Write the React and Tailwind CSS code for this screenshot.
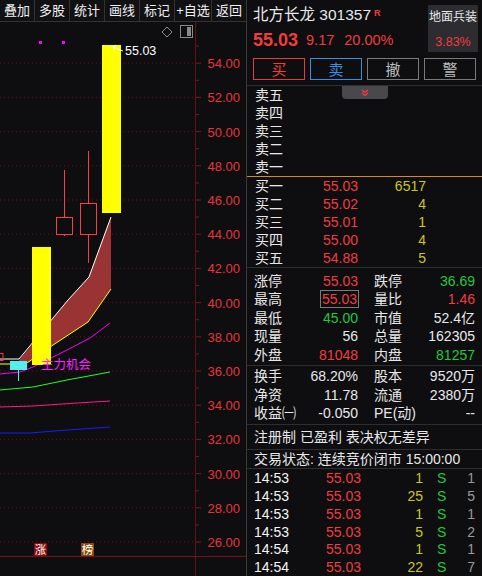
import React from "react";

const SVGF = "'Liberation Sans', 'Noto Sans CJK SC', sans-serif";

function Chart() {
  const labels = [54, 52, 50, 48, 46, 44, 42, 40, 38, 36, 34, 32, 30, 28, 26];
  const yOf = (p) => 542 - (p - 26) * 17.1;
  const ticks = [];
  for (let p = 27; p <= 55; p += 2) ticks.push(p);
  return (
    <svg width="246" height="554" viewBox="0 22 246 554" className="block">
      {labels.map((p) => (
        <g key={p}>
          <line x1="0" x2="195" y1={yOf(p)} y2={yOf(p)} stroke="#6a1212" strokeWidth="1" strokeDasharray="1 3" />
          <line x1="195" x2="201" y1={yOf(p)} y2={yOf(p)} stroke="#7a1a1a" strokeWidth="1" />
          <text x="240" y={yOf(p) + 5} textAnchor="end" fill="#e63636" fontSize="13" fontFamily={SVGF}>
            {p.toFixed(2)}
          </text>
        </g>
      ))}
      {ticks.map((p) => (
        <line key={p} x1="195" x2="199" y1={yOf(p)} y2={yOf(p)} stroke="#7a1a1a" strokeWidth="1" />
      ))}
      <line x1="195.5" x2="195.5" y1="22" y2="576" stroke="#5e1414" strokeWidth="1" />
      <line x1="0" x2="246" y1="556.5" y2="556.5" stroke="#7a1010" strokeWidth="1" />

      <polygon points="167,27 172,32 167,37 162,32" fill="none" stroke="#8a8a8a" strokeWidth="1" />
      <rect x="180.5" y="25.5" width="12" height="12" fill="none" stroke="#8a8a8a" strokeWidth="1" />
      <rect x="187" y="27" width="4" height="9" fill="#8a8a8a" />

      <rect x="39" y="41" width="3" height="3" fill="#ff00ff" />
      <rect x="62" y="41" width="3" height="3" fill="#ff00ff" />

      <polygon points="19,360 68,300 89,277 111,217 111,289 88,322 50,347 27,363 19,363" fill="#9a3434" />
      <polyline points="0,359 19,359 68,300 89,277 111,217" fill="none" stroke="#ffffff" strokeWidth="1" />
      <polyline points="0,364 10,364 27,363 50,347 88,322 111,289" fill="none" stroke="#ffff00" strokeWidth="1" />

      <polyline points="0,374 20,372 33,367 53,357 67,350 90,338 110,323" fill="none" stroke="#ff00ff" strokeWidth="1" />
      <polyline points="0,390 33,387 67,380 110,372" fill="none" stroke="#22ff22" strokeWidth="1" />
      <polyline points="0,407 33,406 77,403 110,401" fill="none" stroke="#ff1a80" strokeWidth="1" />
      <polyline points="0,433 30,433 67,430 110,427" fill="none" stroke="#1a1aff" strokeWidth="1.2" />

      <rect x="-2" y="353.5" width="5" height="7" fill="none" stroke="#ff3333" strokeWidth="1" />
      <rect x="10" y="361" width="17" height="9" fill="#55eeee" />
      <line x1="18.5" x2="18.5" y1="370" y2="381" stroke="#55eeee" strokeWidth="1" />

      <rect x="32" y="247" width="19" height="118" fill="#ffff00" />

      <line x1="64.5" x2="64.5" y1="170" y2="236" stroke="#ff3c3c" strokeWidth="1" />
      <rect x="56.5" y="217.5" width="16" height="17" fill="#0e0e11" stroke="#ff3c3c" strokeWidth="1" />
      <line x1="88.5" x2="88.5" y1="151" y2="263" stroke="#ff3c3c" strokeWidth="1" />
      <rect x="80.5" y="203.5" width="16" height="31" fill="#0e0e11" stroke="#ff3c3c" strokeWidth="1" />

      <rect x="102" y="45" width="19" height="168" fill="#ffff00" />
      <path d="M113 47 L123 51 M113 47 L116 45 M113 47 L115 50" stroke="#ffffff" strokeWidth="1" fill="none" />
      <text x="125" y="55" fill="#ffffff" fontSize="12.5" fontFamily={SVGF}>55.03</text>

      <text x="41" y="369" fill="#ff22ff" fontSize="12.5" fontFamily={SVGF}>主力机会</text>

      <rect x="34" y="543" width="13" height="13" fill="#8b0a0a" />
      <text x="40.5" y="554" textAnchor="middle" fill="#ffffff" fontSize="11.5" fontFamily={SVGF}>涨</text>
      <rect x="81" y="543" width="13" height="13" fill="#8a4a05" />
      <text x="87.5" y="554" textAnchor="middle" fill="#ffffff" fontSize="11.5" fontFamily={SVGF}>榜</text>
    </svg>
  );
}

function Toolbar() {
  const items = [
    ["叠加", "w-[35px]"],
    ["多股", "w-[35px]"],
    ["统计", "w-[35px]"],
    ["画线", "w-[35px]"],
    ["标记", "w-[35px]"],
    ["+自选", "w-[37px]"],
  ];
  return (
    <div className="h-[22px] flex border-b border-[#333] bg-[#111114] text-[13px] text-[#f0f0f0]">
      {items.map(([t, w]) => (
        <div key={t} className={`${w} h-full flex items-center justify-center border-r border-[#333] leading-none whitespace-nowrap`}>
          {t}
        </div>
      ))}
      <div className="flex-1 h-full flex items-center justify-center leading-none">返回</div>
    </div>
  );
}

function BookRow({ label, price, vol }) {
  return (
    <div className="h-[18px] flex items-center pl-[8px] leading-none">
      <span className="w-[50px]">{label}</span>
      <span className="w-[53px] text-right text-[#f23c3c]">{price}</span>
      <span className="w-[68px] text-right text-[#c8c81e]">{vol}</span>
    </div>
  );
}

function StatRow({ l1, v1, c1, l2, v2, c2, box }) {
  return (
    <div className="h-[18.5px] flex items-center pl-[7px] pr-[7px] leading-none">
      <div className="w-[104px] flex justify-between items-center">
        <span>{l1}</span>
        {box ? (
          <span className={`${c1} border border-[#7a7a7a] px-[1px] py-[1px] -mr-[1px]`}>{v1}</span>
        ) : (
          <span className={c1}>{v1}</span>
        )}
      </div>
      <div className="ml-[16px] flex-1 flex justify-between items-center">
        <span>{l2}</span>
        <span className={c2}>{v2}</span>
      </div>
    </div>
  );
}

function TradeRow({ t, p, v, n }) {
  return (
    <div className="h-[17.8px] flex items-center pl-[7px] pr-[7px] leading-none">
      <span className="w-[60px] text-[#f4f4f4]">{t}</span>
      <span className="w-[47px] text-right text-[#f23c3c]">{p}</span>
      <span className="w-[62px] text-right text-[#c8c81e]">{v}</span>
      <span className="w-[8px] ml-[14px] text-[#22c83c]">S</span>
      <span className="flex-1 text-right text-[#9a9a9a]">{n}</span>
    </div>
  );
}

function Panel() {
  const W = "text-[#e8e8e8]";
  return (
    <div className="w-[236px] h-full border-l border-[#3a3a3a] flex flex-col relative text-[14px] text-[#e8e8e8]">
      <div className="h-[87px] border-b border-[#2e2e2e] flex flex-col">
        <div className="flex pl-[6px] pr-[4px]">
          <div className="flex-1 flex flex-col">
            <div className="h-[30px] flex items-center text-[15.5px] leading-none">
              <span>北方长龙 301357</span>
              <span className="text-[9px] font-bold text-[#f23c3c] self-start mt-[9px] ml-[3px]">R</span>
            </div>
            <div className="h-[20px] flex items-center text-[#f23c3c] leading-none">
              <span className="text-[18px] font-bold">55.03</span>
              <span className="text-[14.5px] ml-[8px]">9.17</span>
              <span className="text-[14.5px] ml-[10px]">20.00%</span>
            </div>
          </div>
          <div className="mt-[5px] w-[50px] h-[47px] bg-[#2c2c31] flex flex-col items-center leading-none whitespace-nowrap">
            <span className="text-[12px] mt-[6px]">地面兵装</span>
            <span className="text-[12.5px] text-[#f23c3c] mt-[13px]">3.83%</span>
          </div>
        </div>
        <div className="flex gap-[5px] pl-[6px] mt-[6px] text-[15px] leading-none">
          <div className="w-[52px] h-[22px] border border-[#e23c3c] text-[#f23c3c] flex items-center justify-center">买</div>
          <div className="w-[52px] h-[22px] border border-[#3a8ee0] text-[#3a8ee0] flex items-center justify-center">卖</div>
          <div className="w-[52px] h-[22px] border border-[#7a7a7a] text-[#bdbdbd] flex items-center justify-center">撤</div>
          <div className="w-[52px] h-[22px] border border-[#7a7a7a] text-[#bdbdbd] flex items-center justify-center">警</div>
        </div>
      </div>

      <div className="absolute top-[86px] left-[95px] w-[46px] h-[13px] bg-[#48484d] rounded-b-[4px] flex items-center justify-center">
        <svg width="10" height="8" viewBox="0 0 10 8">
          <polyline points="2,1 5,3.5 8,1" fill="none" stroke="#ff3c3c" strokeWidth="1.2" />
          <polyline points="2,4 5,6.5 8,4" fill="none" stroke="#ff3c3c" strokeWidth="1.2" />
        </svg>
      </div>

      <div className="h-[91px] border-b border-[#d98a1c] flex flex-col">
        {["卖五", "卖四", "卖三", "卖二", "卖一"].map((l) => (
          <BookRow key={l} label={l} price="" vol="" />
        ))}
      </div>

      <div className="h-[91px] border-b border-[#2e2e2e] flex flex-col">
        <BookRow label="买一" price="55.03" vol="6517" />
        <BookRow label="买二" price="55.02" vol="4" />
        <BookRow label="买三" price="55.01" vol="1" />
        <BookRow label="买四" price="55.00" vol="4" />
        <BookRow label="买五" price="54.88" vol="5" />
      </div>

      <div className="h-[98px] border-b border-[#2e2e2e] flex flex-col pt-[3px]">
        <StatRow l1="涨停" v1="55.03" c1="text-[#f23c3c]" l2="跌停" v2="36.69" c2="text-[#22c83c]" />
        <StatRow l1="最高" v1="55.03" c1="text-[#f23c3c]" l2="量比" v2="1.46" c2="text-[#f23c3c]" box />
        <StatRow l1="最低" v1="45.00" c1="text-[#22c83c]" l2="市值" v2="52.4亿" c2={W} />
        <StatRow l1="现量" v1="56" c1={W} l2="总量" v2="162305" c2={W} />
        <StatRow l1="外盘" v1="81048" c1="text-[#f23c3c]" l2="内盘" v2="81257" c2="text-[#22c83c]" />
      </div>

      <div className="h-[60px] border-b border-[#2e2e2e] flex flex-col pt-[1px]">
        <StatRow l1="换手" v1="68.20%" c1={W} l2="股本" v2="9520万" c2={W} />
        <StatRow l1="净资" v1="11.78" c1={W} l2="流通" v2="2380万" c2={W} />
        <StatRow l1="收益㈠" v1="-0.050" c1={W} l2="PE(动)" v2="--" c2={W} />
      </div>

      <div className="h-[25px] border-b border-[#2e2e2e] flex items-center pl-[7px] leading-none">
        注册制 已盈利 表决权无差异
      </div>
      <div className="h-[19px] border-b border-[#2e2e2e] flex items-center pl-[7px] leading-none">
        交易状态: 连续竞价闭市 15:00:00
      </div>

      <div className="flex flex-col">
        <TradeRow t="14:53" p="55.03" v="1" n="1" />
        <TradeRow t="14:53" p="55.03" v="25" n="5" />
        <TradeRow t="14:53" p="55.03" v="1" n="1" />
        <TradeRow t="14:53" p="55.03" v="5" n="2" />
        <TradeRow t="14:54" p="55.03" v="1" n="1" />
        <TradeRow t="14:54" p="55.03" v="22" n="7" />
      </div>
    </div>
  );
}

export default function App() {
  return (
    <div className="w-[482px] h-[576px] flex bg-[#0e0e11] overflow-hidden font-['Liberation_Sans','Noto_Sans_CJK_SC',sans-serif]">
      <div className="w-[246px] h-full flex flex-col">
        <Toolbar />
        <Chart />
      </div>
      <Panel />
    </div>
  );
}
